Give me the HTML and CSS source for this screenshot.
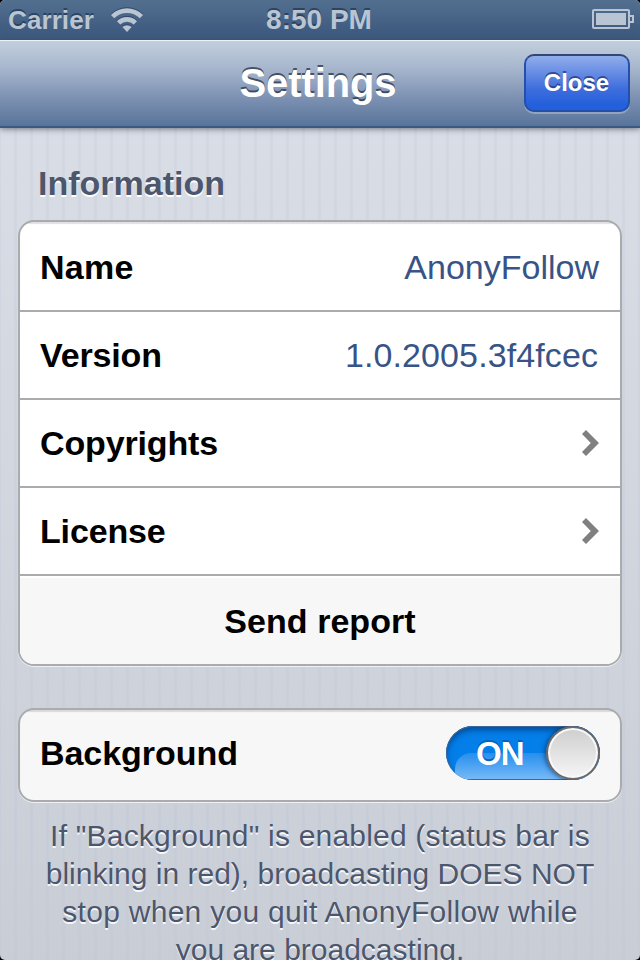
FILE: index.html
```
<!DOCTYPE html>
<html lang="en">
<head>
<meta charset="utf-8">
<title>Settings</title>
<link rel="stylesheet" href="styles.css">
</head>
<body>
<div class="screen">
  <header class="status">
    <div class="network">
      <span class="carrier">Carrier</span>
      <svg class="wifi" width="34" height="26" viewBox="0 0 34 26">
        <g fill="none" stroke="#b9c5d2" stroke-width="4.6">
          <path d="M2.6 9.6a20.4 20.4 0 0 1 28.8 0"/>
          <path d="M8.6 15.8a11.9 11.9 0 0 1 16.8 0"/>
        </g>
        <path d="M12.4 20a6.6 6.6 0 0 1 9.2 0L17 25z" fill="#b9c5d2"/>
      </svg>
    </div>
    <span class="time">8:50 PM</span>
    <svg class="battery" width="43" height="22" viewBox="0 0 43 22">
      <rect x="1" y="2" width="36" height="18" rx="1" fill="none" stroke="#b9c5d2" stroke-width="2"/>
      <rect x="4" y="5" width="30" height="12" fill="#b9c5d2"/>
      <path d="M38 8h3v6h-3" fill="none" stroke="#b9c5d2" stroke-width="2"/>
    </svg>
  </header>
  <nav class="navbar">
    <h1>Settings</h1>
    <button class="close">Close</button>
  </nav>
  <main>
    <h2>Information</h2>
    <section class="group">
      <div class="row"><span class="label name">Name</span><span class="value">AnonyFollow</span></div>
      <div class="row"><span class="label">Version</span><span class="value version">1.0.2005.3f4fcec</span></div>
      <div class="row"><span class="label">Copyrights</span><svg class="chevron" width="20" height="28" viewBox="0 0 20 28"><path d="M1 5 5 1 18 14 5 27 1 23 9.8 14z" fill="#808080"/></svg></div>
      <div class="row"><span class="label">License</span><svg class="chevron" width="20" height="28" viewBox="0 0 20 28"><path d="M1 5 5 1 18 14 5 27 1 23 9.8 14z" fill="#808080"/></svg></div>
      <div class="row action"><span class="label">Send report</span></div>
    </section>
    <section class="group background">
      <div class="row"><span class="label">Background</span>
        <div class="switch"><span class="on">ON</span><span class="knob"></span></div>
      </div>
    </section>
    <p class="note"><span class="loose">If "Background" is enabled (status bar is</span><br>blinking in red), broadcasting DOES NOT<br><span class="looser">stop when you quit AnonyFollow while</span><br>you are broadcasting.</p>
  </main>
</div>
</body>
</html>
```
FILE: styles.css
```
* { box-sizing: border-box; }
body { margin: 0; background: #000; font-family: "Liberation Sans", Arial, sans-serif; }
.screen {
  width: 640px; height: 960px; overflow: hidden; border-radius: 5px;
  background:
    linear-gradient(90deg, transparent 13px, rgba(185,193,212,.2) 13px) 1px 0 / 16px 100%,
    linear-gradient(#d9dde5 128px, #c9cdd6);
}
.status {
  height: 40px; display: grid; grid-template-columns: 1fr auto 1fr; align-items: center;
  padding: 0 5px 0 8px; color: #b9c5d2; font-weight: bold;
  background: linear-gradient(#536f90, #3e5b80 80%, #3e5b80);
  text-shadow: 0 -2px 0 rgba(35,55,85,.75);
}
.network { display: flex; align-items: center; gap: 16px; }
.carrier { font-size: 26px; line-height: 40px; letter-spacing: .1px; }
.wifi { filter: drop-shadow(0 -1px 0 #2c4668); margin-top: -1px; }
.time { font-size: 28px; line-height: 38px; margin: 0 5px 0 0; }
.battery { justify-self: end; margin-top: -2px; }
.navbar {
  height: 88px; position: relative; z-index: 1; display: grid; grid-template-columns: 1fr auto 1fr; align-items: center;
  padding: 0 10px; border-top: 1px solid #edf2f7; border-bottom: 2px solid #3b5a82;
  background: linear-gradient(#c2cfdd, #a7b6cd 32%, #8094b4 64%, #58749b);
  box-shadow: 0 1px 6px rgba(50,60,75,.65);
}
h1 { grid-column: 2; margin: 0 4px 2px 0; font-size: 40px; line-height: 84px; color: #fff; text-shadow: 0 -2px 0 rgba(40,50,65,.75); letter-spacing: -.1px; }
.close {
  justify-self: end; width: 106px; height: 58px; margin: 0 0 2px; padding: 0 1px 1px 0;
  font: bold 24px "Liberation Sans", Arial, sans-serif; color: #fff;
  border: 2px solid #2450ab; border-top-color: #324774; border-radius: 10px;
  background: linear-gradient(#91adec, #3f6edc 60%, #2460dc 90%);
  text-shadow: 0 -2px 0 rgba(30,50,110,.7);
  box-shadow: 0 2px 0 rgba(255,255,255,.28);
}
main { padding: 32px 18px 0; }
h2 { margin: 0 20px 14px; font-size: 34px; line-height: 46px; color: #4c566c; text-shadow: 0 2px 0 #fff; }
.group {
  border: 2px solid #a9abad; border-radius: 16px; background: #fff; overflow: hidden;
  box-shadow: 0 1px 0 #eef0f3;
}
.row { height: 88px; display: flex; align-items: center; justify-content: space-between; padding: 2px 20px 0; font-size: 34px; line-height: 40px; }
.row:first-child { box-shadow: inset 0 2px 1px rgba(0,0,0,.12); }
.row + .row { border-top: 2px solid #a9abad; padding-top: 0; }
.label { font-weight: bold; color: #000; letter-spacing: -.15px; }
.label.name { letter-spacing: .3px; }
.value { color: #385487; margin-right: 1px; }
.version { margin-right: 2px; letter-spacing: .1px; }
.chevron { margin-right: -1px; }
.row.action { height: 90px; justify-content: center; background: #f7f7f7; box-shadow: inset 0 2px 0 #fff; padding-top: 2px; }
.row.action .label { letter-spacing: .05px; }
.background { margin-top: 42px; background: #f7f7f7; }
.background .row { height: 90px; padding-top: 0; }
.background .label { line-height: 38px; padding-bottom: 5px; letter-spacing: -.05px; }
.switch {
  position: relative; width: 154px; height: 54px; border-radius: 27px; overflow: hidden;
  margin-top: -4px; background: #047fe9;
  box-shadow: inset 0 0 0 1px #3e6898, inset 0 4px 6px rgba(0,45,105,.65);
}
.switch::before {
  content: ""; position: absolute; left: 9px; right: 0; top: 27px; bottom: 1px;
  border-radius: 16px 0 0 0; background: linear-gradient(#268eed, #76b9f7);
}
.on { position: absolute; left: 30px; top: 8px; color: #fff; font-weight: bold; font-size: 33px; line-height: 40px; letter-spacing: -1px; text-shadow: 0 -2px 0 #0462b7; }
.knob {
  position: absolute; right: 0; top: 0; width: 54px; height: 54px; border-radius: 50%;
  border: 2px solid #69696c; background: linear-gradient(#cecece, #f6f6f6);
  box-shadow: inset 0 0 0 2px #f8f8f8, -1px 0 5px rgba(0,40,90,.7);
}
.note { margin: 15px 0 0; text-align: center; font-size: 30px; line-height: 38px; color: #4c566c; text-shadow: 0 2px 0 #f5f7fa; white-space: nowrap; }
.loose { letter-spacing: .2px; }
.looser { letter-spacing: .28px; }
```
